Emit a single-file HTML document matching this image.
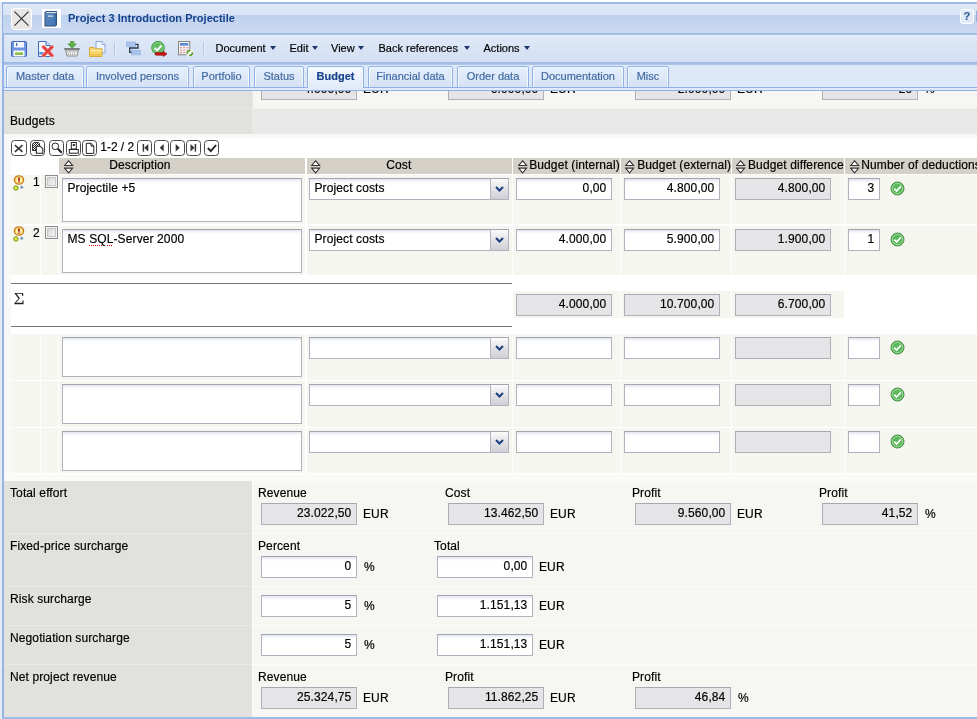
<!DOCTYPE html>
<html lang="en"><head><meta charset="utf-8"><title>Project 3 Introduction Projectile</title>
<style>
html,body{margin:0;padding:0}
body{width:977px;height:719px;overflow:hidden;background:#fff;position:relative;font-family:"Liberation Sans",Arial,sans-serif;font-size:12px;color:#000;line-height:14px;letter-spacing:.11px;-webkit-text-stroke:.18px}
.a{position:absolute;box-sizing:border-box}
.t{position:absolute;white-space:nowrap}
.inp{position:absolute;box-sizing:border-box;border:1px solid #b1b2bd;border-top-color:#a3a4af;background:#fff linear-gradient(#dfe4ee 0,#f3f5f9 2px,#fff 4px);text-align:right;padding:2px 4.600px 0 0;white-space:nowrap;overflow:hidden;height:22px}
.ta{text-align:left;padding:2px 0 0 4.5px}
.ro{background:#e5e5e7;border-color:#a8a8b2 #b0b0ba #b0b0ba #aeaeb8}
.cell{position:absolute;background:#f6f6f0}
.hd{position:absolute;background:#d4d0c8;text-align:center;white-space:nowrap;overflow:hidden;height:16px;top:158px;line-height:14px}
.lab{position:absolute;background:#e1e1de;left:4px;width:248px}
.rt{position:absolute;background:#f6f6f2;left:253px;width:724px}
.tab{letter-spacing:0;position:absolute;box-sizing:border-box;top:66px;height:21px;border:1px solid #8db2e3;border-bottom:none;border-radius:3px 3px 0 0;background:linear-gradient(#e6effb,#d5e2f5);color:#416aa3;font-size:11px;text-align:center;line-height:19px;white-space:nowrap}
.tab i{position:absolute;left:0;right:0;top:0;bottom:0;border:1px solid #f4f8fd;border-bottom:none;border-radius:2px 2px 0 0}
.tb{letter-spacing:0;position:absolute;font-size:11px;color:#000;white-space:nowrap;top:41px;line-height:14px}
.arr{position:absolute;top:46px;width:0;height:0;border-left:3px solid transparent;border-right:3px solid transparent;border-top:4px solid #1d3a6e}
.pb{position:absolute;box-sizing:border-box;width:15.3px;height:15.6px;top:140px;border:1px solid #4a4a4a;border-radius:3.5px;background:#fff}
.pb svg{position:absolute;left:0;top:0}
.ic{position:absolute;width:16px;height:16px;top:41px}
</style></head>
<body><div id="w" style="position:absolute;left:0;top:0;width:977px;height:719px;will-change:transform">
<div class="a" style="left:0;top:2px;width:2px;height:717px;background:#e4ebf7"></div>
<div class="a" style="left:2px;top:2px;width:2px;height:717px;background:#94b4e3"></div>
<div class="a" style="left:3px;top:2px;width:974px;height:31px;border-top:2px solid #9dbbe6;background:linear-gradient(#e6eefa 0,#dde7f6 1.5px,#d9e4f5 11px,#bfd1ee 11.5px,#cbdaf1 100%)"></div>
<div class="a" style="left:3px;top:33px;width:974px;height:2px;background:linear-gradient(#9cb8e3,#a9c2e8)"></div>
<div class="a" style="left:10.5px;top:8px;width:21px;height:21.5px;border:1px solid #fff;border-radius:3.5px;background:#e9e7e5"><svg width="19" height="19" viewBox="0 0 19 19" style="position:absolute;left:0;top:0"><path d="M2.5 2.700L16.500 16.700M16.500 2.700L2.500 16.700" stroke="#333" stroke-width="1.2" fill="none"/></svg></div>
<div class="a" style="left:42px;top:9px;width:19px;height:19px;background:#fff"><svg width="19" height="19" viewBox="0 0 19 19" style="position:absolute;left:0;top:0"><defs><linearGradient id="bk" x1="0" y1="0" x2="1" y2="1"><stop offset="0" stop-color="#5f86b5"/><stop offset="1" stop-color="#3d78b8"/></linearGradient></defs><path d="M2.5 3.5L4 2h11v14l-1.5 1.5h-11z" fill="#2f5078"/><rect x="3.5" y="4" width="10" height="12.5" fill="url(#bk)"/><rect x="4" y="3" width="10.5" height="1" fill="#dfe8f3"/><rect x="6" y="6.5" width="5" height="1.2" fill="#dbe6f3"/></svg></div>
<div class="t" style="left:68px;top:11px;font-weight:bold;font-size:11px;color:#15428b;line-height:14px;letter-spacing:.02px;-webkit-text-stroke:0">Project 3 Introduction Projectile</div>
<div class="a" style="left:959.700px;top:9.300px;width:14.400px;height:14.400px;border:1px solid #fff;border-radius:3px;background:#e1eaf8;color:#365f98;font-size:11px;font-weight:bold;text-align:center;line-height:12.500px">?</div>
<div class="a" style="left:976px;top:11px;width:1px;height:11px;background:#8fafe0"></div>
<div class="a" style="left:4px;top:35px;width:973px;height:27px;background:linear-gradient(#eaf1fa 0,#dee8f7 1.5px,#d3e0f3 100%)"></div>
<div class="a" style="left:4px;top:62px;width:973px;height:2.5px;background:linear-gradient(#98b4e2,#b4c9ea)"></div>
<svg class="ic" style="left:11px" viewBox="0 0 16 16"><rect x=".5" y=".5" width="15" height="15" rx="1.2" fill="#6f96e0" stroke="#4163b0"/><rect x="3" y="1" width="10" height="5.5" fill="#f3f6fc"/><rect x="5" y="2" width="1.300" height="3" fill="#4a66a8"/><rect x="2.500" y="9.500" width="11" height="6" fill="#fdfdfd"/><rect x="4" y="11.300" width="8" height="2.400" fill="#8ec63f"/><rect x="4" y="13.500" width="8" height=".500" fill="#5f9a1f"/></svg>
<svg class="ic" style="left:38px" viewBox="0 0 16 16"><path d="M.5.5h7.500l4 4v11h-11.500z" fill="#f2f6fd" stroke="#3f6fb8"/><path d="M8 .500v4h4" fill="#d4e2f6" stroke="#3f6fb8"/><rect x="1.300" y="11" width="4" height="2.500" fill="#4f94dc"/><path d="M5.500 6l8.500 8.500M14 6l-8.500 8.500" stroke="#f08484" stroke-width="3.600" stroke-linecap="round"/><path d="M5.500 6l8.500 8.500M14 6l-8.500 8.500" stroke="#e63c3c" stroke-width="2.400" stroke-linecap="round"/></svg>
<svg class="ic" style="left:63.500px" viewBox="0 0 16 16"><path d="M6.500 .300h3.200v2.700h2.600l-4.200 4.200l-4.200 -4.200h2.600z" fill="#62b345" stroke="#3f8a26" stroke-width=".700"/><path d="M.300 8h15.400" stroke="#6e6e6e" stroke-width="1.700"/><path d="M1.600 9h12.800l-1.400 6h-10z" fill="#f6f6f6" stroke="#7c7c7c" stroke-width=".900"/><path d="M3.500 10.500h9M3.700 12h8.600M4 13.500h8" stroke="#8a8a8a" stroke-width=".900" stroke-dasharray="1 1"/></svg>
<svg class="ic" style="left:89px;width:17px" viewBox="0 0 17 16"><path d="M7 .500h6l3 3v8.500h-9z" fill="#f0f4fc" stroke="#86a4d4"/><path d="M13 .500v3h3" fill="#dbe6f6" stroke="#86a4d4" stroke-width=".800"/><path d="M.500 6.500h4.500l1.300 1.300h6.700v7.700h-12.500z" fill="#f6d467" stroke="#d6a93a"/><path d="M1.200 9.500h11.200" stroke="#fdeeb0" stroke-width="1.400"/><path d="M1.200 13.800h11.200" stroke="#eec04a" stroke-width="1.400"/></svg>
<div class="a" style="left:114px;top:42px;width:1px;height:14px;background:#b4c8e8"></div><div class="a" style="left:115px;top:42px;width:1px;height:14px;background:#e9f0fa"></div>
<svg class="ic" style="left:126px" viewBox="0 0 16 16"><rect x=".300" y="1" width="9" height="4.700" fill="#a9c5ec" stroke="#8fb2e2" stroke-width=".600"/><rect x="5.300" y="9.200" width="9" height="4.700" fill="#a9c5ec" stroke="#8fb2e2" stroke-width=".600"/><path d="M9.300 3.300h2.700v3.700h-8.300v4.300h1.800" fill="none" stroke="#27374f" stroke-width="1.300"/></svg>
<svg class="ic" style="left:150px;width:18px" viewBox="0 0 18 16"><circle cx="8" cy="6.700" r="6.300" fill="#62bd62" stroke="#3c9a3c" stroke-width="1"/><circle cx="8" cy="6.700" r="5.100" fill="none" stroke="#8ad68a" stroke-width=".800"/><path d="M4.600 6.900l2.500 2.500l4.300 -4.800" fill="none" stroke="#fff" stroke-width="1.900"/><path d="M6.300 11.600h7v-1.300l3.700 2.600l-3.700 2.600v-1.300h-7a1.300 1.300 0 0 1 0 -2.600z" fill="#d81414" stroke="#7a0606" stroke-width=".600"/></svg>
<svg class="ic" style="left:178px" viewBox="0 0 16 16"><rect x=".500" y=".500" width="11.300" height="13.300" fill="#f3f3f3" stroke="#848484"/><rect x="2" y="2" width="8.300" height="2.600" fill="#5c88d2"/><path d="M2 6.700h2M5.200 6.700h2M8.400 6.700h2M2 9.200h2M5.200 9.200h2M8.400 9.200h2M2 11.700h2M5.200 11.700h2" stroke="#dc9a9a" stroke-width="1.300"/><circle cx="11.800" cy="12" r="3.700" fill="#f3f8ee"/><path d="M9.300 12.800a2.600 2.600 0 0 1 2 -3.300M14.300 11.200a2.600 2.600 0 0 1 -2 3.300" fill="none" stroke="#5aa02c" stroke-width="1.700"/><path d="M10.600 8.300l2.300 1.200l-2 1.500zM13 15.700l-2.300 -1.200l2 -1.500z" fill="#5aa02c"/></svg>
<div class="a" style="left:202.500px;top:42px;width:1px;height:14px;background:#b4c8e8"></div><div class="a" style="left:203.500px;top:42px;width:1px;height:14px;background:#e9f0fa"></div>
<div class="tb" style="left:215.5px">Document</div><div class="arr" style="left:270px"></div>
<div class="tb" style="left:289.5px">Edit</div><div class="arr" style="left:312px"></div>
<div class="tb" style="left:331px">View</div><div class="arr" style="left:358px"></div>
<div class="tb" style="left:378.5px">Back references</div><div class="arr" style="left:463.5px"></div>
<div class="tb" style="left:483.5px">Actions</div><div class="arr" style="left:523.5px"></div>
<div class="a" style="left:4px;top:64.5px;width:973px;height:26.5px;background:#dde8f8"></div>
<div class="a" style="left:4px;top:87px;width:973px;height:1px;background:#8db2e3"></div>
<div class="a" style="left:4px;top:88px;width:973px;height:2px;background:#e1eaf8"></div>
<div class="a" style="left:4px;top:90px;width:973px;height:1px;background:#8db2e3"></div>
<div class="tab" style="left:6px;width:78px"><i></i>Master data</div>
<div class="tab" style="left:86px;width:103px"><i></i>Involved persons</div>
<div class="tab" style="left:193px;width:57px"><i></i>Portfolio</div>
<div class="tab" style="left:254px;width:50px"><i></i>Status</div>
<div class="tab" style="left:307px;width:57px;height:22px;background:linear-gradient(#f6f9fe,#e1eaf8);color:#15428b;font-weight:bold;font-size:11px"><i></i>Budget</div><div class="a" style="left:308px;top:87px;width:55px;height:3px;background:#e1eaf8"></div>
<div class="tab" style="left:368px;width:85px"><i></i>Financial data</div>
<div class="tab" style="left:457px;width:72px"><i></i>Order data</div>
<div class="tab" style="left:532px;width:92px"><i></i>Documentation</div>
<div class="tab" style="left:627px;width:42px"><i></i>Misc</div>
<div class="a" style="left:4px;top:91px;width:973px;height:626px;overflow:hidden"><div class="a" style="left:-4px;top:-91px;width:977px;height:719px">
<div class="a" style="left:4px;top:91px;width:249px;height:43px;background:#e7e7e4"></div><div class="a" style="left:253px;top:91px;width:724px;height:43px;background:#f1f1ef"></div>
<div class="lab" style="top:90px;height:18px"></div>
<div class="rt" style="top:90px;height:18px"></div>
<div class="inp ro" style="left:261px;top:77.5px;width:96px;padding-top:3px">4.000,00</div><div class="t" style="left:363px;top:81.700px">EUR</div>
<div class="inp ro" style="left:448px;top:77.5px;width:96px;padding-top:3px">6.000,00</div><div class="t" style="left:550px;top:81.700px">EUR</div>
<div class="inp ro" style="left:635px;top:77.5px;width:96px;padding-top:3px">2.000,00</div><div class="t" style="left:737px;top:81.700px">EUR</div>
<div class="inp ro" style="left:822px;top:77.5px;width:96px;padding-top:3px">20</div><div class="t" style="left:924px;top:81.700px">%</div>
<div class="lab" style="top:109px;height:24.5px"></div>
<div class="a" style="left:253px;top:109px;width:724px;height:24.5px;background:#e9e9e9"></div>
<div class="a" style="left:4px;top:133.500px;width:973px;height:4.800px;background:#f8f8f6"></div>
<div class="a" style="left:4px;top:133.500px;width:6.500px;height:345px;background:#f8f8f6"></div>
<div class="t" style="left:10px;top:114px">Budgets</div>
<div class="pb" style="left:11.3px"><svg width="14" height="14" viewBox="0 0 14 14"><path d="M2.900 4.100L10.500 10.900M10.500 4.100L2.900 10.900" stroke="#333" stroke-width="1.500"/></svg></div>
<div class="pb" style="left:30.2px"><svg width="14" height="14" viewBox="0 0 14 14"><defs><pattern id="dz" width="2" height="2" patternUnits="userSpaceOnUse"><rect width="2" height="2" fill="#fff"/><rect width="1" height="1" fill="#222"/><rect x="1" y="1" width="1" height="1" fill="#222"/></pattern></defs><path d="M1.500 3l1.500 -1.500h4.500l1 1v7h-7z" fill="url(#dz)" stroke="#222" stroke-width=".900"/><path d="M5.300 5.200h4l2.500 2.500v4.500h-6.500z" fill="#fff" stroke="#222" stroke-width="1.100"/></svg></div>
<div class="pb" style="left:49px"><svg width="14" height="14" viewBox="0 0 14 14"><circle cx="5.300" cy="5.300" r="3.300" fill="#fff" stroke="#222" stroke-width="1"/><path d="M7.800 7.800l4 4" stroke="#222" stroke-width="2"/></svg></div>
<div class="pb" style="left:65.5px"><svg width="14" height="14" viewBox="0 0 14 14"><rect x="4.300" y="1.500" width="5" height="6.500" fill="#fff" stroke="#222"/><rect x="5.800" y="3" width="2" height="2" fill="#222"/><rect x="2.300" y="8.500" width="9" height="3.700" fill="#fff" stroke="#222"/></svg></div>
<div class="pb" style="left:81.8px"><svg width="14" height="14" viewBox="0 0 14 14"><path d="M3.300 2.300h4.700l2.800 2.800v7.300h-7.500z" fill="#fff" stroke="#222"/><path d="M8 2.300v2.800h2.800" fill="none" stroke="#222"/></svg></div>
<div class="t" style="left:100.300px;top:140px;font-size:12px;letter-spacing:-.03px">1-2 / 2</div>
<div class="pb" style="left:137.2px"><svg width="14" height="14" viewBox="0 0 14 14"><path d="M5.400 3v7.600" stroke="#333" stroke-width="1.500"/><path d="M10.300 3v7.600l-4 -3.800z" fill="#333"/></svg></div>
<div class="pb" style="left:153.6px"><svg width="14" height="14" viewBox="0 0 14 14"><path d="M8.700 3v7.600l-4 -3.800z" fill="#333"/></svg></div>
<div class="pb" style="left:169.5px"><svg width="14" height="14" viewBox="0 0 14 14"><path d="M4.700 3v7.600l4 -3.800z" fill="#333"/></svg></div>
<div class="pb" style="left:185.5px"><svg width="14" height="14" viewBox="0 0 14 14"><path d="M8.400 3v7.600" stroke="#333" stroke-width="1.500"/><path d="M3.500 3v7.600l4 -3.800z" fill="#333"/></svg></div>
<div class="pb" style="left:204.2px"><svg width="14" height="14" viewBox="0 0 14 14"><path d="M2.800 7l3 3.200l5.300 -6.200" fill="none" stroke="#222" stroke-width="1.900"/></svg></div>
<div class="hd" style="left:59.2px;width:246.3px"></div><svg width="10" height="14" viewBox="0 0 10 14" style="position:absolute;left:63.7px;top:159.600px"><path d="M.600 5.500L4.600 .800L8.600 5.500zM.600 8.100L4.600 12.900L8.600 8.100z" fill="#fff" stroke="#333" stroke-width="1.100"/></svg><div class="t" style="left:109.3px;top:158px">Description</div>
<div class="hd" style="left:306.7px;width:205.50000000000006px"></div><svg width="10" height="14" viewBox="0 0 10 14" style="position:absolute;left:310.7px;top:159.600px"><path d="M.600 5.500L4.600 .800L8.600 5.500zM.600 8.100L4.600 12.900L8.600 8.100z" fill="#fff" stroke="#333" stroke-width="1.100"/></svg><div class="t" style="left:386.3px;top:158px">Cost</div>
<div class="hd" style="left:513.4px;width:106.60000000000002px"></div><svg width="10" height="14" viewBox="0 0 10 14" style="position:absolute;left:517.5px;top:159.600px"><path d="M.600 5.500L4.600 .800L8.600 5.500zM.600 8.100L4.600 12.900L8.600 8.100z" fill="#fff" stroke="#333" stroke-width="1.100"/></svg><div class="t" style="left:529.2px;top:158px">Budget (internal)</div>
<div class="hd" style="left:621px;width:110px"></div><svg width="10" height="14" viewBox="0 0 10 14" style="position:absolute;left:625.3px;top:159.600px"><path d="M.600 5.500L4.600 .800L8.600 5.500zM.600 8.100L4.600 12.900L8.600 8.100z" fill="#fff" stroke="#333" stroke-width="1.100"/></svg><div class="t" style="left:637.2px;top:158px">Budget (external)</div>
<div class="hd" style="left:732.3px;width:111.90000000000009px"></div><svg width="10" height="14" viewBox="0 0 10 14" style="position:absolute;left:736.3px;top:159.600px"><path d="M.600 5.500L4.600 .800L8.600 5.500zM.600 8.100L4.600 12.900L8.600 8.100z" fill="#fff" stroke="#333" stroke-width="1.100"/></svg><div class="t" style="left:748px;top:158px">Budget difference</div>
<div class="hd" style="left:845.4px;width:131.60000000000002px"></div><svg width="10" height="14" viewBox="0 0 10 14" style="position:absolute;left:849.7px;top:159.600px"><path d="M.600 5.500L4.600 .800L8.600 5.500zM.600 8.100L4.600 12.900L8.600 8.100z" fill="#fff" stroke="#333" stroke-width="1.100"/></svg><div class="t" style="left:861.3px;top:158px">Number of deductions</div>
<div class="cell" style="left:11px;top:174.5px;width:29.299999999999997px;height:49.5px"></div>
<div class="cell" style="left:41.3px;top:174.5px;width:17.200000000000003px;height:49.5px"></div>
<div class="cell" style="left:59.2px;top:174.5px;width:246.3px;height:49.5px"></div>
<div class="cell" style="left:306.7px;top:174.5px;width:205.50000000000006px;height:49.5px"></div>
<div class="cell" style="left:513.4px;top:174.5px;width:106.60000000000002px;height:49.5px"></div>
<div class="cell" style="left:621px;top:174.5px;width:110px;height:49.5px"></div>
<div class="cell" style="left:732.3px;top:174.5px;width:111.90000000000009px;height:49.5px"></div>
<div class="cell" style="left:845.4px;top:174.5px;width:131.60000000000002px;height:49.5px"></div>
<div class="inp ta" style="left:62px;top:178px;width:240px;height:44px">Projectile +5</div>
<div class="inp ta" style="left:309px;top:178px;width:200px;height:22px">Project costs<div style="position:absolute;right:0;top:0;width:17px;height:20px;background:linear-gradient(#fbfbfb,#e3e3e6 50%,#cfd0d6);border-left:1px solid #b4b4be"><svg width="17" height="20" viewBox="0 0 17 20" style="position:absolute;left:0;top:0"><path d="M5 8l3.500 3.500l3.500 -3.500" fill="none" stroke="#1f3f7f" stroke-width="2"/></svg></div></div>
<div class="inp" style="left:516px;top:178px;width:96px">0,00</div>
<div class="inp" style="left:624px;top:178px;width:96px">4.800,00</div>
<div class="inp ro" style="left:735px;top:178px;width:96px">4.800,00</div>
<div class="inp" style="left:848px;top:178px;width:32px">3</div>
<svg width="15" height="15" viewBox="0 0 15 15" style="position:absolute;left:889.600px;top:181.2px"><circle cx="7.500" cy="7.500" r="6.500" fill="#5cb85c" stroke="#3e8e3e" stroke-width="1"/><circle cx="7.500" cy="7.500" r="5.300" fill="none" stroke="#b6e2b0" stroke-width=".8"/><path d="M4.300 7.600l2.300 2.400l4.200 -4.600" fill="none" stroke="#fff" stroke-width="1.700"/></svg>
<div class="cell" style="left:11px;top:225.5px;width:29.299999999999997px;height:49.80000000000001px"></div>
<div class="cell" style="left:41.3px;top:225.5px;width:17.200000000000003px;height:49.80000000000001px"></div>
<div class="cell" style="left:59.2px;top:225.5px;width:246.3px;height:49.80000000000001px"></div>
<div class="cell" style="left:306.7px;top:225.5px;width:205.50000000000006px;height:49.80000000000001px"></div>
<div class="cell" style="left:513.4px;top:225.5px;width:106.60000000000002px;height:49.80000000000001px"></div>
<div class="cell" style="left:621px;top:225.5px;width:110px;height:49.80000000000001px"></div>
<div class="cell" style="left:732.3px;top:225.5px;width:111.90000000000009px;height:49.80000000000001px"></div>
<div class="cell" style="left:845.4px;top:225.5px;width:131.60000000000002px;height:49.80000000000001px"></div>
<div class="inp ta" style="left:62px;top:229px;width:240px;height:44px">MS <span style="text-decoration:underline dotted #d00;text-underline-offset:2px">SQL</span>-Server 2000</div>
<div class="inp ta" style="left:309px;top:229px;width:200px;height:22px">Project costs<div style="position:absolute;right:0;top:0;width:17px;height:20px;background:linear-gradient(#fbfbfb,#e3e3e6 50%,#cfd0d6);border-left:1px solid #b4b4be"><svg width="17" height="20" viewBox="0 0 17 20" style="position:absolute;left:0;top:0"><path d="M5 8l3.500 3.500l3.500 -3.500" fill="none" stroke="#1f3f7f" stroke-width="2"/></svg></div></div>
<div class="inp" style="left:516px;top:229px;width:96px">4.000,00</div>
<div class="inp" style="left:624px;top:229px;width:96px">5.900,00</div>
<div class="inp ro" style="left:735px;top:229px;width:96px">1.900,00</div>
<div class="inp" style="left:848px;top:229px;width:32px">1</div>
<svg width="15" height="15" viewBox="0 0 15 15" style="position:absolute;left:889.600px;top:232.2px"><circle cx="7.500" cy="7.500" r="6.500" fill="#5cb85c" stroke="#3e8e3e" stroke-width="1"/><circle cx="7.500" cy="7.500" r="5.300" fill="none" stroke="#b6e2b0" stroke-width=".8"/><path d="M4.300 7.600l2.300 2.400l4.200 -4.600" fill="none" stroke="#fff" stroke-width="1.700"/></svg>
<svg width="13" height="17" viewBox="0 0 13 17" style="position:absolute;left:13px;top:175px"><ellipse cx="6" cy="5" rx="4.600" ry="4.200" fill="#fff3b0" stroke="#c07a18" stroke-width="1.300"/><ellipse cx="6" cy="5" rx="3.600" ry="3.200" fill="none" stroke="#f6c040" stroke-width=".700"/><path d="M6 2.500v3.200" stroke="#a81818" stroke-width="1.700"/><circle cx="6" cy="7.100" r=".800" fill="#a81818"/><circle cx="2.900" cy="13" r="2.200" fill="#cfe326" stroke="#6e8c12" stroke-width=".900"/><circle cx="2.900" cy="13" r=".700" fill="#f4fa9a"/><circle cx="8.700" cy="12.200" r="1.500" fill="#6a8fb0" stroke="#c6d6e4" stroke-width=".500"/></svg>
<div class="t" style="left:33px;top:175px">1</div>
<div class="a" style="left:45px;top:175.2px;width:13px;height:13px;border:1px solid #8c8c8c;background:#f4f4f4"><div class="a" style="left:1px;top:1px;width:9px;height:9px;border:1px solid #c6c6c6;background:linear-gradient(135deg,#d4d4d4,#f6f6f6)"></div></div>
<svg width="13" height="17" viewBox="0 0 13 17" style="position:absolute;left:13px;top:226px"><ellipse cx="6" cy="5" rx="4.600" ry="4.200" fill="#fff3b0" stroke="#c07a18" stroke-width="1.300"/><ellipse cx="6" cy="5" rx="3.600" ry="3.200" fill="none" stroke="#f6c040" stroke-width=".700"/><path d="M6 2.500v3.200" stroke="#a81818" stroke-width="1.700"/><circle cx="6" cy="7.100" r=".800" fill="#a81818"/><circle cx="2.900" cy="13" r="2.200" fill="#cfe326" stroke="#6e8c12" stroke-width=".900"/><circle cx="2.900" cy="13" r=".700" fill="#f4fa9a"/><circle cx="8.700" cy="12.200" r="1.500" fill="#6a8fb0" stroke="#c6d6e4" stroke-width=".500"/></svg>
<div class="t" style="left:33px;top:226px">2</div>
<div class="a" style="left:45px;top:226.2px;width:13px;height:13px;border:1px solid #8c8c8c;background:#f4f4f4"><div class="a" style="left:1px;top:1px;width:9px;height:9px;border:1px solid #c6c6c6;background:linear-gradient(135deg,#d4d4d4,#f6f6f6)"></div></div>
<div class="a" style="left:11px;top:283px;width:501px;height:1px;background:#777"></div>
<div class="a" style="left:11px;top:326px;width:501px;height:1px;background:#777"></div>
<div class="t" style="left:13.500px;top:287px;font-family:'Noto Serif CJK SC','Liberation Serif',serif;font-size:15px;line-height:22px;color:#222;font-weight:400;-webkit-text-stroke:.25px;transform:scaleX(1.1);transform-origin:0 0">&Sigma;</div>
<div class="cell" style="left:513.4px;top:291px;width:106.60000000000002px;height:27px"></div>
<div class="inp ro" style="left:516px;top:294px;width:96px">4.000,00</div>
<div class="cell" style="left:621px;top:291px;width:110px;height:27px"></div>
<div class="inp ro" style="left:624px;top:294px;width:96px">10.700,00</div>
<div class="cell" style="left:732.3px;top:291px;width:111.90000000000009px;height:27px"></div>
<div class="inp ro" style="left:735px;top:294px;width:96px">6.700,00</div>
<div class="cell" style="left:11px;top:334px;width:29.299999999999997px;height:45.5px"></div>
<div class="cell" style="left:41.3px;top:334px;width:17.200000000000003px;height:45.5px"></div>
<div class="cell" style="left:59.2px;top:334px;width:246.3px;height:45.5px"></div>
<div class="cell" style="left:306.7px;top:334px;width:205.50000000000006px;height:45.5px"></div>
<div class="cell" style="left:513.4px;top:334px;width:106.60000000000002px;height:45.5px"></div>
<div class="cell" style="left:621px;top:334px;width:110px;height:45.5px"></div>
<div class="cell" style="left:732.3px;top:334px;width:111.90000000000009px;height:45.5px"></div>
<div class="cell" style="left:845.4px;top:334px;width:131.60000000000002px;height:45.5px"></div>
<div class="inp ta" style="left:62px;top:337px;width:240px;height:40px"></div>
<div class="inp ta" style="left:309px;top:337px;width:200px;height:22px"><div style="position:absolute;right:0;top:0;width:17px;height:20px;background:linear-gradient(#fbfbfb,#e3e3e6 50%,#cfd0d6);border-left:1px solid #b4b4be"><svg width="17" height="20" viewBox="0 0 17 20" style="position:absolute;left:0;top:0"><path d="M5 8l3.500 3.500l3.500 -3.500" fill="none" stroke="#1f3f7f" stroke-width="2"/></svg></div></div>
<div class="inp" style="left:516px;top:337px;width:96px"></div>
<div class="inp" style="left:624px;top:337px;width:96px"></div>
<div class="inp ro" style="left:735px;top:337px;width:96px"></div>
<div class="inp" style="left:848px;top:337px;width:32px"></div>
<svg width="15" height="15" viewBox="0 0 15 15" style="position:absolute;left:889.600px;top:340.2px"><circle cx="7.500" cy="7.500" r="6.500" fill="#5cb85c" stroke="#3e8e3e" stroke-width="1"/><circle cx="7.500" cy="7.500" r="5.300" fill="none" stroke="#b6e2b0" stroke-width=".8"/><path d="M4.300 7.600l2.300 2.400l4.200 -4.600" fill="none" stroke="#fff" stroke-width="1.700"/></svg>
<div class="cell" style="left:11px;top:381px;width:29.299999999999997px;height:45.69999999999999px"></div>
<div class="cell" style="left:41.3px;top:381px;width:17.200000000000003px;height:45.69999999999999px"></div>
<div class="cell" style="left:59.2px;top:381px;width:246.3px;height:45.69999999999999px"></div>
<div class="cell" style="left:306.7px;top:381px;width:205.50000000000006px;height:45.69999999999999px"></div>
<div class="cell" style="left:513.4px;top:381px;width:106.60000000000002px;height:45.69999999999999px"></div>
<div class="cell" style="left:621px;top:381px;width:110px;height:45.69999999999999px"></div>
<div class="cell" style="left:732.3px;top:381px;width:111.90000000000009px;height:45.69999999999999px"></div>
<div class="cell" style="left:845.4px;top:381px;width:131.60000000000002px;height:45.69999999999999px"></div>
<div class="inp ta" style="left:62px;top:384px;width:240px;height:40px"></div>
<div class="inp ta" style="left:309px;top:384px;width:200px;height:22px"><div style="position:absolute;right:0;top:0;width:17px;height:20px;background:linear-gradient(#fbfbfb,#e3e3e6 50%,#cfd0d6);border-left:1px solid #b4b4be"><svg width="17" height="20" viewBox="0 0 17 20" style="position:absolute;left:0;top:0"><path d="M5 8l3.500 3.500l3.500 -3.500" fill="none" stroke="#1f3f7f" stroke-width="2"/></svg></div></div>
<div class="inp" style="left:516px;top:384px;width:96px"></div>
<div class="inp" style="left:624px;top:384px;width:96px"></div>
<div class="inp ro" style="left:735px;top:384px;width:96px"></div>
<div class="inp" style="left:848px;top:384px;width:32px"></div>
<svg width="15" height="15" viewBox="0 0 15 15" style="position:absolute;left:889.600px;top:387.2px"><circle cx="7.500" cy="7.500" r="6.500" fill="#5cb85c" stroke="#3e8e3e" stroke-width="1"/><circle cx="7.500" cy="7.500" r="5.300" fill="none" stroke="#b6e2b0" stroke-width=".8"/><path d="M4.300 7.600l2.300 2.400l4.200 -4.600" fill="none" stroke="#fff" stroke-width="1.700"/></svg>
<div class="cell" style="left:11px;top:428px;width:29.299999999999997px;height:45px"></div>
<div class="cell" style="left:41.3px;top:428px;width:17.200000000000003px;height:45px"></div>
<div class="cell" style="left:59.2px;top:428px;width:246.3px;height:45px"></div>
<div class="cell" style="left:306.7px;top:428px;width:205.50000000000006px;height:45px"></div>
<div class="cell" style="left:513.4px;top:428px;width:106.60000000000002px;height:45px"></div>
<div class="cell" style="left:621px;top:428px;width:110px;height:45px"></div>
<div class="cell" style="left:732.3px;top:428px;width:111.90000000000009px;height:45px"></div>
<div class="cell" style="left:845.4px;top:428px;width:131.60000000000002px;height:45px"></div>
<div class="inp ta" style="left:62px;top:431px;width:240px;height:40px"></div>
<div class="inp ta" style="left:309px;top:431px;width:200px;height:22px"><div style="position:absolute;right:0;top:0;width:17px;height:20px;background:linear-gradient(#fbfbfb,#e3e3e6 50%,#cfd0d6);border-left:1px solid #b4b4be"><svg width="17" height="20" viewBox="0 0 17 20" style="position:absolute;left:0;top:0"><path d="M5 8l3.500 3.500l3.500 -3.500" fill="none" stroke="#1f3f7f" stroke-width="2"/></svg></div></div>
<div class="inp" style="left:516px;top:431px;width:96px"></div>
<div class="inp" style="left:624px;top:431px;width:96px"></div>
<div class="inp ro" style="left:735px;top:431px;width:96px"></div>
<div class="inp" style="left:848px;top:431px;width:32px"></div>
<svg width="15" height="15" viewBox="0 0 15 15" style="position:absolute;left:889.600px;top:434.2px"><circle cx="7.500" cy="7.500" r="6.500" fill="#5cb85c" stroke="#3e8e3e" stroke-width="1"/><circle cx="7.500" cy="7.500" r="5.300" fill="none" stroke="#b6e2b0" stroke-width=".8"/><path d="M4.300 7.600l2.300 2.400l4.200 -4.600" fill="none" stroke="#fff" stroke-width="1.700"/></svg>
<div class="a" style="left:4px;top:473.5px;width:973px;height:8px;background:#fafaf8"></div>
<div class="a" style="left:4px;top:481px;width:248px;height:238px;background:#e9e9e6"></div>
<div class="a" style="left:252px;top:481px;width:725px;height:238px;background:#fbfbf9"></div>
<div class="lab" style="top:481px;height:51.5px"></div>
<div class="rt" style="top:481px;height:51.5px"></div>
<div class="t" style="left:10px;top:486px">Total effort</div>
<div class="lab" style="top:534px;height:51.5px"></div>
<div class="rt" style="top:534px;height:51.5px"></div>
<div class="t" style="left:10px;top:539px">Fixed-price surcharge</div>
<div class="lab" style="top:587px;height:37.5px"></div>
<div class="rt" style="top:587px;height:37.5px"></div>
<div class="t" style="left:10px;top:591.5px">Risk surcharge</div>
<div class="lab" style="top:626px;height:38px"></div>
<div class="rt" style="top:626px;height:38px"></div>
<div class="t" style="left:10px;top:631px">Negotiation surcharge</div>
<div class="lab" style="top:665.3px;height:51.700000000000045px"></div>
<div class="rt" style="top:665.3px;height:51.700000000000045px"></div>
<div class="t" style="left:10px;top:670px">Net project revenue</div>
<div class="t" style="left:258px;top:486px">Revenue</div>
<div class="inp ro" style="left:261px;top:503px;width:96px">23.022,50</div>
<div class="t" style="left:363px;top:507px">EUR</div>
<div class="t" style="left:445px;top:486px">Cost</div>
<div class="inp ro" style="left:448px;top:503px;width:96px">13.462,50</div>
<div class="t" style="left:550px;top:507px">EUR</div>
<div class="t" style="left:632px;top:486px">Profit</div>
<div class="inp ro" style="left:635px;top:503px;width:96px">9.560,00</div>
<div class="t" style="left:737px;top:507px">EUR</div>
<div class="t" style="left:819px;top:486px">Profit</div>
<div class="inp ro" style="left:822px;top:503px;width:96px">41,52</div>
<div class="t" style="left:925px;top:507px">%</div>
<div class="t" style="left:258px;top:539px">Percent</div><div class="t" style="left:434px;top:539px">Total</div>
<div class="inp" style="left:261px;top:556px;width:96px">0</div>
<div class="t" style="left:364px;top:560px">%</div>
<div class="inp" style="left:437px;top:556px;width:96px">0,00</div>
<div class="t" style="left:539px;top:560px">EUR</div>
<div class="inp" style="left:261px;top:595px;width:96px">5</div>
<div class="t" style="left:364px;top:599px">%</div>
<div class="inp" style="left:437px;top:595px;width:96px">1.151,13</div>
<div class="t" style="left:539px;top:599px">EUR</div>
<div class="inp" style="left:261px;top:634px;width:96px">5</div>
<div class="t" style="left:364px;top:638px">%</div>
<div class="inp" style="left:437px;top:634px;width:96px">1.151,13</div>
<div class="t" style="left:539px;top:638px">EUR</div>
<div class="t" style="left:258px;top:669.5px">Revenue</div>
<div class="inp ro" style="left:261px;top:687px;width:96px">25.324,75</div>
<div class="t" style="left:363px;top:691px">EUR</div>
<div class="t" style="left:445px;top:669.5px">Profit</div>
<div class="inp ro" style="left:448px;top:687px;width:96px">11.862,25</div>
<div class="t" style="left:550px;top:691px">EUR</div>
<div class="t" style="left:632px;top:669.5px">Profit</div>
<div class="inp ro" style="left:635px;top:687px;width:96px">46,84</div>
<div class="t" style="left:738px;top:691px">%</div>
</div></div>
<div class="a" style="left:3px;top:717px;width:974px;height:2px;background:#9dbbe6"></div>
</div></body></html>
